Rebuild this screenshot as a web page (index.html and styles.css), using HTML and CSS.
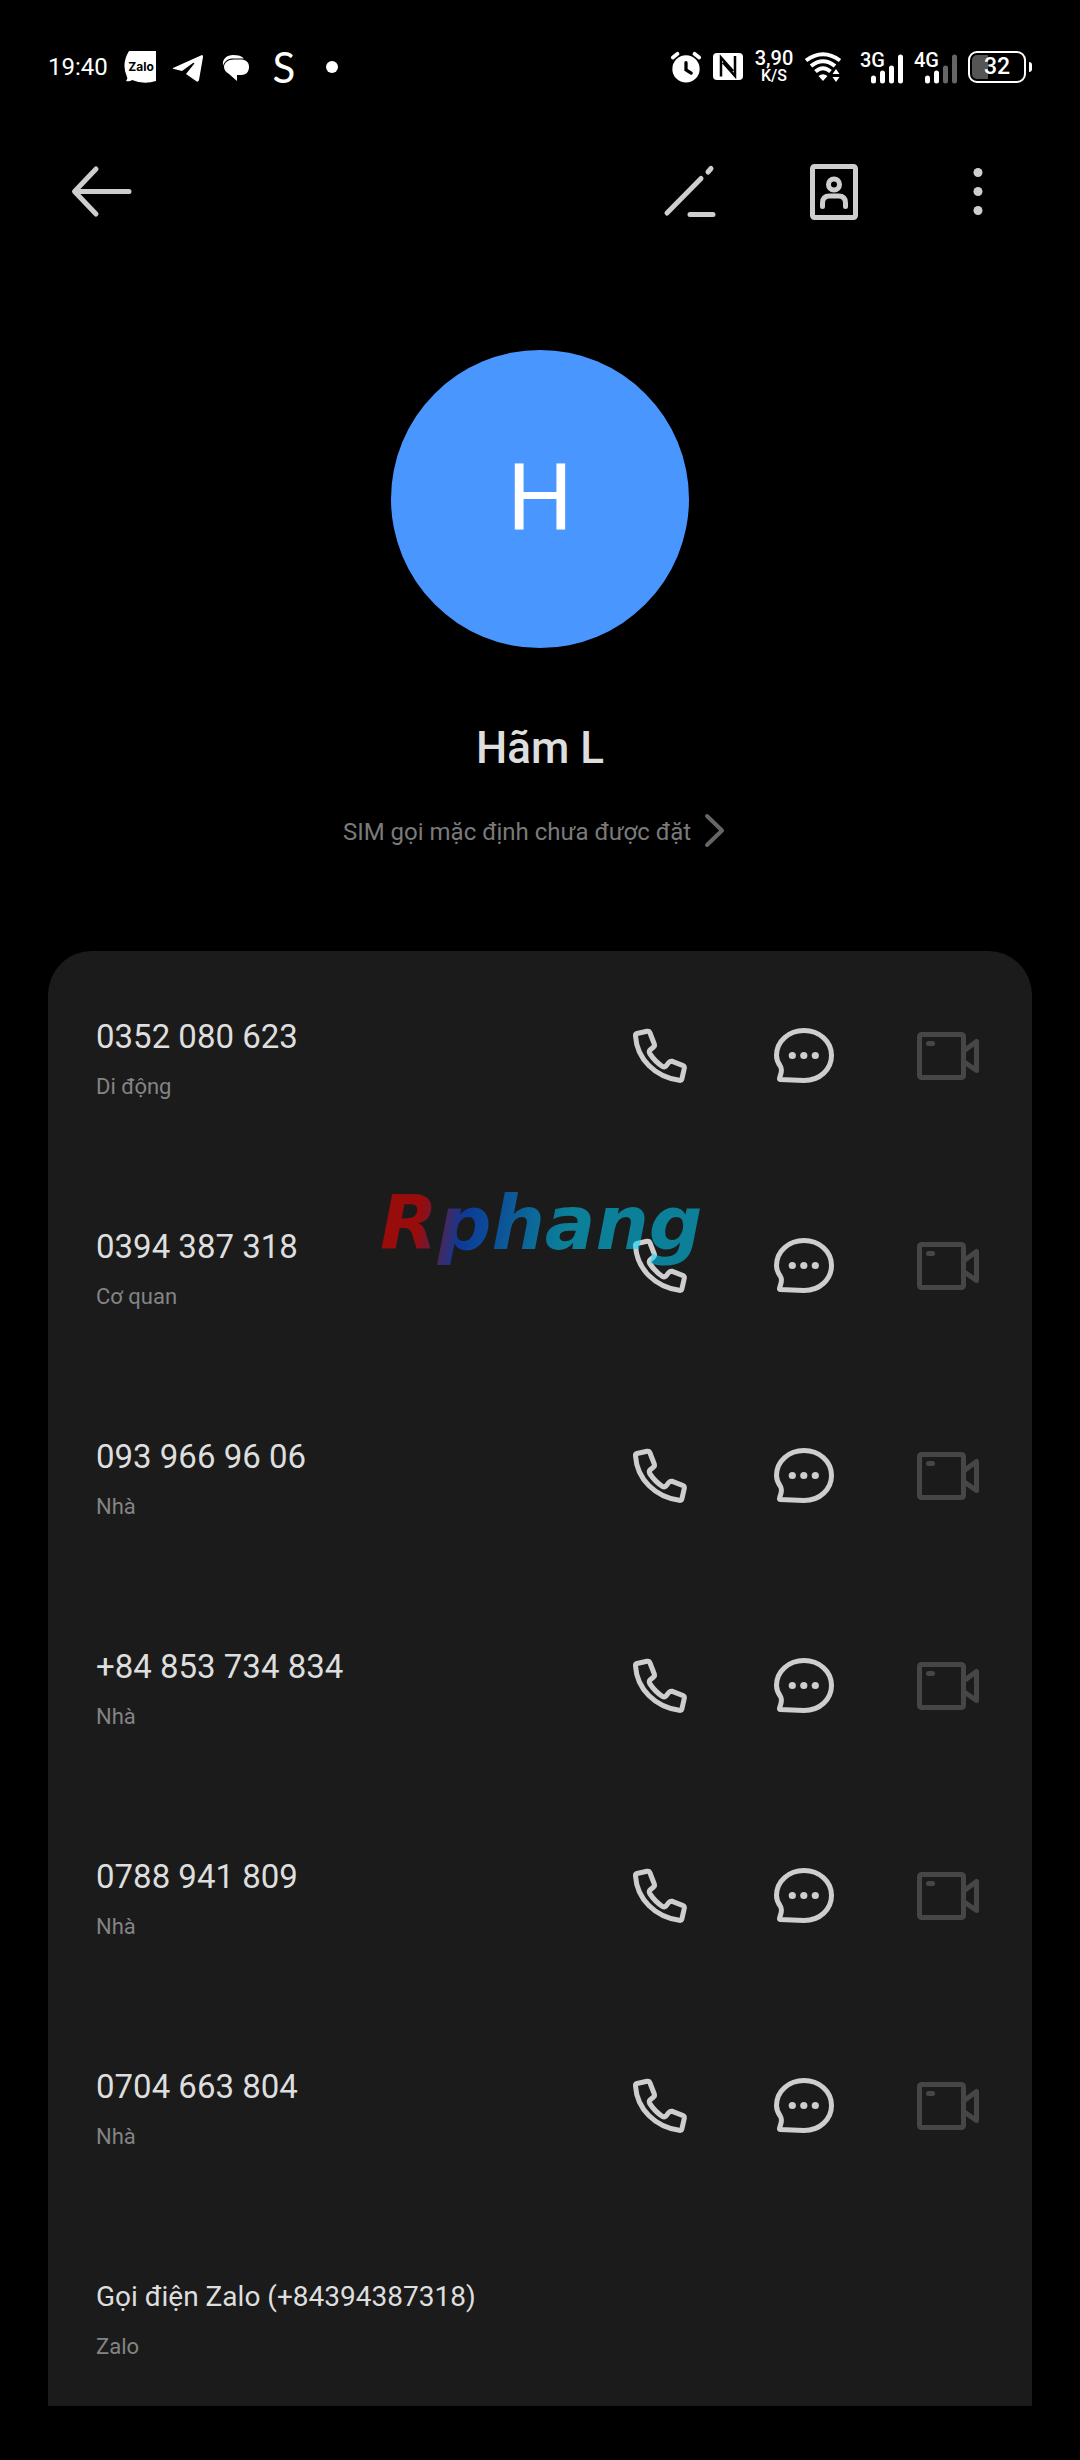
FILE: index.html
```html
<!DOCTYPE html>
<html lang="vi">
  <head>
    <meta charset="UTF-8" />
    <meta name="viewport" content="width=device-width, initial-scale=1.0" />
    <title>Hãm L</title>
    <link rel="stylesheet" href="styles.css">
  </head>
  <body>
    <svg class="sprite" aria-hidden="true">
      <symbol id="phone" viewBox="0 0 72 72">
        <path d="M11.5 16Q11 14 13 13.5L23 11.3Q25.3 11 26 13L30.3 24Q31 26 29.3 27.3L26 30Q24.7 31.5 25.7 33.5Q31 41.5 38.5 46.5Q40.5 47.5 42 46L45 42.3Q46.3 40.8 48.3 41.3L58.5 45.3Q60.7 46.3 60.3 48.3L58 58.5Q57.5 60.7 55.3 60.3C31 57 13 39 11.5 16Z" />
      </symbol>
      <symbol id="chat" viewBox="0 0 72 72">
        <path d="M12 59.5L36 60.5C52 60.5 63.5 49 63.5 35.5C63.5 21 51 10.5 36 10.5C21 10.5 8.5 21 8.5 35.5C8.5 40 10 43 12.5 46.5C15 50.5 12.5 54 11.5 58.5Q11.3 59.5 12 59.5Z" />
        <g class="fill">
          <circle cx="24.3" cy="35.5" r="3.6" />
          <circle cx="35.8" cy="35.5" r="3.6" />
          <circle cx="47.3" cy="35.5" r="3.6" />
        </g>
      </symbol>
      <symbol id="video" viewBox="0 0 72 72">
        <rect x="7.5" y="14.5" width="44" height="43" rx="2" />
        <path d="M16.5 23.5h4" />
        <path d="M53 30L64.5 21.5V50.5L53 42.5" />
      </symbol>
    </svg>

    <div class="status-bar">
      <div class="status-left">
        <span class="clock">19:40</span>
        <svg class="s32" viewBox="0 0 32 32">
          <path fill="#fff" d="M5 0H32V30Q20 34 8 29Q6 31 2 30Q4 28 3 26Q-3 13 5 0Z" />
          <text x="17" y="20" class="zalo-text">Zalo</text>
        </svg>
        <svg class="s32" viewBox="0 0 32 32">
          <path fill="#fff" d="M1 17L30 4Q31 4 31 6L27 29Q26 32 24 30L14 23L22 13Q23 11 21 12L10 20L2 18Q0 18 1 17Z" />
        </svg>
        <svg class="s32" viewBox="0 0 32 32">
          <path fill="#fff" d="M3 14C2 8 7 4 13 4C18 4 22 5 24 7.500L12 7.500C7 8 4 11 3 15Z" />
          <path fill="#fff" d="M14 8.500H20C26 8.500 29 11 29 16C29 21 26 24 21 24H17L17 30L9 23C6 21 4 19 4 16C4 12 8 8.500 14 8.500Z" />
        </svg>
        <span class="app-letter">S</span>
        <span class="dot"></span>
      </div>
      <div class="status-right">
        <svg class="s32" viewBox="0 0 32 34">
          <circle cx="16" cy="19" r="14.500" fill="#fff" />
          <path d="M16 12.500V20L21.500 23.500" stroke="#000" stroke-width="3.500" fill="none" stroke-linecap="round" />
          <path d="M2 7L7 3M25 3L30 7" stroke="#fff" stroke-width="4" stroke-linecap="round" />
        </svg>
        <svg class="s32" viewBox="0 0 32 32">
          <rect x="1" y="2" width="30" height="27" rx="4" fill="#fff" />
          <path d="M9 25.500V6.500L21 20M23 5V25L11 11.500" stroke="#000" stroke-width="2.500" fill="none" />
        </svg>
        <div class="speed"><b>3,90</b><small>K/S</small></div>
        <svg class="wifi" viewBox="0 0 38 32">
          <g fill="none" stroke="#fff" stroke-width="4">
            <path d="M2 9.500Q19-3 36 9.500" />
            <path d="M7 15Q19 5.500 31 15" />
            <path d="M11.500 20.500Q19 14 26.500 20.500" />
          </g>
          <path fill="#fff" d="M14.500 25Q19 21.500 23.500 25L19 30ZM32 18L35.500 23H28.500ZM28.500 26H35.500L32 31Z" />
        </svg>
        <div class="signal">
          <span>3G</span>
          <svg viewBox="0 0 44 34">
            <path d="M13.500 28V31M22.500 23V31M31.500 18V31M40.500 7V31" />
          </svg>
        </div>
        <div class="signal">
          <span>4G</span>
          <svg viewBox="0 0 44 34">
            <path d="M13.500 28V31M22.500 23V31" />
            <path class="off" d="M31.500 18V31M40.500 7V31" />
          </svg>
        </div>
        <div class="battery"><span class="battery-body">32</span><span class="battery-tip"></span></div>
      </div>
    </div>

    <header class="toolbar">
      <button class="icon-btn" aria-label="Quay lại">
        <svg viewBox="0 0 72 72"><path d="M30 13L8.500 35.500L30 58M9 35.500H63" /></svg>
      </button>
      <div class="actions">
        <button class="icon-btn" aria-label="Chỉnh sửa">
          <svg viewBox="0 0 72 72"><path d="M13 57L47 22.500M54 16L57 12.500M36 58.500H59" /></svg>
        </button>
        <button class="icon-btn" aria-label="Danh thiếp">
          <svg viewBox="0 0 72 72">
            <rect x="14.500" y="10.500" width="43" height="51" rx="2" />
            <circle cx="36" cy="28.500" r="5.500" />
            <path d="M24.500 50.500V47Q24.500 40 31.500 40H40.500Q47.500 40 47.500 47V50.500" />
          </svg>
        </button>
        <button class="icon-btn" aria-label="Thêm">
          <svg viewBox="0 0 72 72">
            <g class="fill">
              <circle cx="36" cy="16.500" r="4.500" />
              <circle cx="36" cy="35.500" r="4.500" />
              <circle cx="36" cy="54.500" r="4.500" />
            </g>
          </svg>
        </button>
      </div>
    </header>

    <section class="profile">
      <div class="avatar">H</div>
      <h1>Hãm L</h1>
      <button class="sim">
        <span>SIM gọi mặc định chưa được đặt</span>
        <svg viewBox="0 0 36 40"><path d="M6 4L21 18.500L6 33" /></svg>
      </button>
    </section>

    <main class="numbers">
      <div class="row">
        <div class="info"><p class="number">0352 080 623</p><p class="label">Di động</p></div>
        <div class="actions">
          <button class="icon-btn" aria-label="Gọi"><svg><use href="#phone" /></svg></button>
          <button class="icon-btn" aria-label="Nhắn tin"><svg><use href="#chat" /></svg></button>
          <button class="icon-btn" aria-label="Gọi video" disabled><svg><use href="#video" /></svg></button>
        </div>
      </div>
      <div class="row">
        <div class="info"><p class="number">0394 387 318</p><p class="label">Cơ quan</p></div>
        <div class="actions">
          <button class="icon-btn" aria-label="Gọi"><svg><use href="#phone" /></svg></button>
          <button class="icon-btn" aria-label="Nhắn tin"><svg><use href="#chat" /></svg></button>
          <button class="icon-btn" aria-label="Gọi video" disabled><svg><use href="#video" /></svg></button>
        </div>
        <span class="watermark">Rphang</span>
      </div>
      <div class="row">
        <div class="info"><p class="number">093 966 96 06</p><p class="label">Nhà</p></div>
        <div class="actions">
          <button class="icon-btn" aria-label="Gọi"><svg><use href="#phone" /></svg></button>
          <button class="icon-btn" aria-label="Nhắn tin"><svg><use href="#chat" /></svg></button>
          <button class="icon-btn" aria-label="Gọi video" disabled><svg><use href="#video" /></svg></button>
        </div>
      </div>
      <div class="row">
        <div class="info"><p class="number">+84 853 734 834</p><p class="label">Nhà</p></div>
        <div class="actions">
          <button class="icon-btn" aria-label="Gọi"><svg><use href="#phone" /></svg></button>
          <button class="icon-btn" aria-label="Nhắn tin"><svg><use href="#chat" /></svg></button>
          <button class="icon-btn" aria-label="Gọi video" disabled><svg><use href="#video" /></svg></button>
        </div>
      </div>
      <div class="row">
        <div class="info"><p class="number">0788 941 809</p><p class="label">Nhà</p></div>
        <div class="actions">
          <button class="icon-btn" aria-label="Gọi"><svg><use href="#phone" /></svg></button>
          <button class="icon-btn" aria-label="Nhắn tin"><svg><use href="#chat" /></svg></button>
          <button class="icon-btn" aria-label="Gọi video" disabled><svg><use href="#video" /></svg></button>
        </div>
      </div>
      <div class="row">
        <div class="info"><p class="number">0704 663 804</p><p class="label">Nhà</p></div>
        <div class="actions">
          <button class="icon-btn" aria-label="Gọi"><svg><use href="#phone" /></svg></button>
          <button class="icon-btn" aria-label="Nhắn tin"><svg><use href="#chat" /></svg></button>
          <button class="icon-btn" aria-label="Gọi video" disabled><svg><use href="#video" /></svg></button>
        </div>
      </div>
      <div class="row">
        <div class="info"><p class="number app">Gọi điện Zalo (+84394387318)</p><p class="label">Zalo</p></div>
      </div>
    </main>
  </body>
</html>
```
FILE: styles.css
```css
* {
  box-sizing: border-box;
}
body {
  margin: 0;
  height: 100vh;
  padding-bottom: 54px;
  display: flex;
  flex-direction: column;
  overflow: hidden;
  background: #000;
  color: #dedede;
  font-family: Roboto, sans-serif;
}
h1,
p {
  margin: 0;
  font-weight: normal;
}
svg {
  display: block;
}
.sprite {
  position: absolute;
  width: 0;
  height: 0;
}

/* status bar */
.status-bar {
  flex: none;
  height: 120px;
  padding: 14px 48px 0;
  display: flex;
  justify-content: space-between;
  align-items: center;
  color: #fff;
}
.status-left,
.status-right {
  display: flex;
  align-items: center;
}
.status-left {
  gap: 16px;
}
.status-right {
  gap: 10px;
  font-weight: 500;
}
.clock {
  width: 60px;
  font-size: 24px;
}
.s32 {
  width: 32px;
  height: 32px;
}
.zalo-text {
  font: bold 12px Inter, sans-serif;
  text-anchor: middle;
}
.app-letter {
  width: 32px;
  font: 42px/40px Lato, sans-serif;
  text-align: center;
}
.dot {
  width: 12px;
  height: 12px;
  margin-left: 10px;
  border-radius: 50%;
  background: #fff;
}
.speed {
  width: 40px;
  display: flex;
  flex-direction: column;
  text-align: center;
}
.speed b {
  font-size: 20px;
  line-height: 18px;
  font-weight: 500;
}
.speed small {
  font-size: 16px;
  line-height: 18px;
}
.wifi {
  width: 38px;
  height: 32px;
  margin-right: 8px;
}
.signal {
  display: grid;
  width: 44px;
}
.signal span,
.signal svg {
  grid-area: 1 / 1;
}
.signal span {
  font-size: 20px;
  line-height: 20px;
}
.signal svg {
  height: 34px;
  fill: none;
  stroke: #fff;
  stroke-width: 5;
  stroke-linecap: round;
}
.signal .off {
  stroke: #666;
}
.battery {
  display: flex;
  align-items: center;
  gap: 3px;
}
.battery-body {
  width: 58px;
  height: 32px;
  border: 2px solid #fff;
  border-radius: 9px;
  background: linear-gradient(90deg, #555 32%, #000 32%) content-box;
  padding: 2px;
  font-size: 23px;
  line-height: 24px;
  text-align: center;
}
.battery-tip {
  width: 3px;
  height: 10px;
  border-radius: 0 3px 3px 0;
  background: #fff;
}

/* toolbar */
.toolbar {
  flex: none;
  height: 144px;
  padding: 0 66px;
  display: flex;
  justify-content: space-between;
  align-items: center;
}
.actions {
  display: flex;
  gap: 72px;
}
.icon-btn {
  width: 72px;
  height: 72px;
  padding: 0;
  border: none;
  background: none;
  color: #cecece;
  cursor: pointer;
}
.icon-btn:disabled {
  color: #464646;
}
.icon-btn svg {
  width: 72px;
  height: 72px;
  fill: none;
  stroke: currentColor;
  stroke-width: 5;
  stroke-linecap: round;
  stroke-linejoin: round;
}
.fill {
  fill: currentColor;
  stroke: none;
}

/* profile */
.profile {
  flex: none;
  height: 687px;
  padding-top: 86px;
  display: flex;
  flex-direction: column;
  align-items: center;
}
.avatar {
  width: 298px;
  height: 298px;
  border-radius: 50%;
  background: #4a96ff;
  color: #fff;
  font-size: 92px;
  line-height: 298px;
  text-align: center;
}
h1 {
  margin-top: 64px;
  font-size: 44px;
  font-weight: 500;
  line-height: 72px;
}
.sim {
  margin-top: 28px;
  padding: 0;
  display: flex;
  align-items: center;
  gap: 10px;
  border: none;
  background: none;
  color: #7a7a7a;
  font-family: inherit;
  font-size: 24px;
  cursor: pointer;
}
.sim svg {
  width: 36px;
  height: 40px;
  fill: none;
  stroke: #666;
  stroke-width: 4;
  stroke-linecap: round;
  stroke-linejoin: round;
}

/* phone numbers */
.numbers {
  flex: 1;
  min-height: 0;
  margin: 0 48px;
  border-radius: 44px 44px 0 0;
  background: #1b1b1b;
  overflow: hidden;
}
.row {
  position: relative;
  height: 210px;
  padding: 0 48px;
  display: flex;
  justify-content: space-between;
  align-items: center;
}
.info {
  padding-top: 8px;
}
.number {
  font-size: 33px;
  line-height: 48px;
}
.number.app {
  font-size: 28px;
}
.label {
  margin-top: 6px;
  color: #848484;
  font-size: 22px;
  line-height: 40px;
}
.watermark {
  position: absolute;
  left: 332px;
  top: 12px;
  font: italic bold 75px/100px "DejaVu Sans", sans-serif;
  color: transparent;
  background: linear-gradient(100deg, #f00 14%, #05f 27%, #00d4ff 58%);
  background-clip: text;
  -webkit-background-clip: text;
  opacity: 0.55;
  pointer-events: none;
}
```
